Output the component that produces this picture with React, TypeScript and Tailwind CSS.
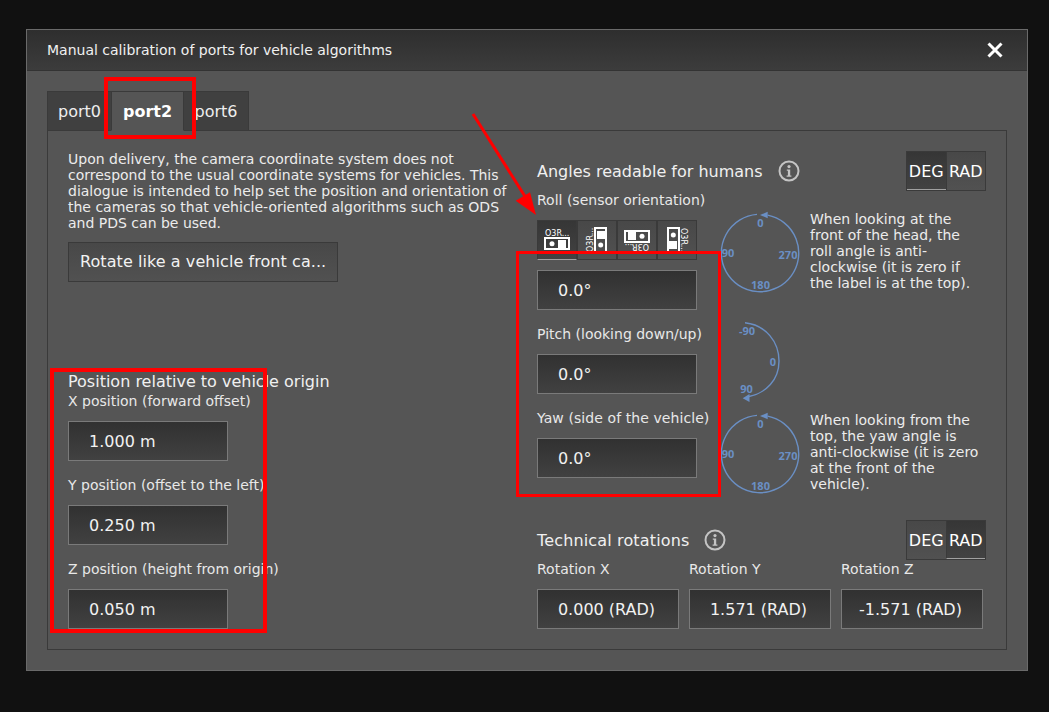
const font = { fontFamily: '"DejaVu Sans", sans-serif' };
const labelStyle = { fontFamily: '"Open Sans", sans-serif', fontWeight: 700, fontSize: 11 };

function ChipIcon({ rotate }: { rotate: number }) {
  return (
    <svg viewBox="0 0 40 40" className="-m-px block h-10 w-10">
      <g transform={`rotate(${rotate} 20 20)`}>
        <text x="8" y="16" fill="#fff" fontSize="8" fontFamily="DejaVu Sans, sans-serif">
          O3R...
        </text>
        <rect x="8" y="18" width="24" height="11" fill="none" stroke="#fff" strokeWidth="2" />
        <circle cx="15" cy="23.7" r="2.5" fill="#fff" />
        <rect x="21" y="20" width="8" height="8" fill="#fff" />
      </g>
    </svg>
  );
}

function InfoIcon() {
  return (
    <svg viewBox="0 0 22 22" className="block h-[22px] w-[22px]">
      <circle cx="11" cy="11" r="9.5" fill="none" stroke="#c4c4c4" strokeWidth="2" />
      <circle cx="11" cy="6.6" r="1.6" fill="#c4c4c4" />
      <path d="M8.8 9.4h3.4v6h1.2v1.4H8.6v-1.4h1.3v-4.6H8.8z" fill="#c4c4c4" />
    </svg>
  );
}

function Circle() {
  return (
    <svg viewBox="0 0 90 80" className="h-20 w-[90px] shrink-0 overflow-visible">
      <path d="M47.7 4.07A38.7 38.7 0 1 1 37 3.42" fill="none" stroke="#6a8fc4" strokeWidth="1.4" />
      <path d="M40 4 47.7 0.7 47.7 7.3z" fill="#6a8fc4" />
      <g fill="#6a8fc4" style={labelStyle} textAnchor="middle">
        <text x="40.5" y="16">0</text>
        <text x="8" y="46">90</text>
        <text x="68" y="48">270</text>
        <text x="40.5" y="78">180</text>
      </g>
    </svg>
  );
}

function PitchArc() {
  return (
    <svg viewBox="0 0 90 80" className="h-20 w-[90px] overflow-visible">
      <path d="M25 2.7C46 5 59 22 59 41 59 60 46 73 29 76.5" fill="none" stroke="#6a8fc4" strokeWidth="1.4" />
      <path d="M22.7 78.3 29.5 74 29.5 82z" fill="#6a8fc4" />
      <g fill="#6a8fc4" style={labelStyle} textAnchor="middle">
        <text x="27" y="15">-90</text>
        <text x="53" y="46">0</text>
        <text x="26.5" y="73">90</text>
      </g>
    </svg>
  );
}

function Field({ label, value, center, className }: { label: string; value: string; center?: boolean; className?: string }) {
  return (
    <div className={className}>
      <div className="h-4 whitespace-nowrap text-sm leading-4 text-[#e8e8e8]">{label}</div>
      <div
        className={`mt-3 flex h-10 items-center border border-[#7a7a7a] bg-gradient-to-b from-[#313131] to-[#414141] pt-0.5 text-base text-[#f2f2f2] ${
          center ? "justify-center pr-[3px]" : "pl-5"
        }`}
      >
        {value}
      </div>
    </div>
  );
}

function UnitToggle({ active }: { active: "DEG" | "RAD" }) {
  return (
    <div className="flex h-10 w-20 border border-[#3a3a3a] text-base text-white">
      {["DEG", "RAD"].map((unit, i) => (
        <div
          key={unit}
          className={`flex flex-1 items-center justify-center pt-0.5 ${i === 1 ? "border-l border-[#3a3a3a]" : ""} ${
            unit === active
              ? "border-b border-b-[#a0a0a0] bg-gradient-to-b from-[#363636] to-[#424242]"
              : "bg-gradient-to-b from-[#484848] to-[#515151]"
          }`}
        >
          {unit}
        </div>
      ))}
    </div>
  );
}

export default function App() {
  const tabs = ["port0", "port2", "port6"];
  return (
    <div className="relative h-[712px] w-[1049px] overflow-hidden bg-[#111111] pl-[26px] pt-[29px]" style={font}>
      <div className="h-[642px] w-[1002px] border border-[#6a6a6a] bg-[#555555]">
        <div className="flex h-[41px] items-center justify-between border-b border-[#333333] bg-gradient-to-b from-[#2e2e2e] to-[#3c3c3c] pl-5 pr-6">
          <span className="text-sm text-[#f0f0f0]">Manual calibration of ports for vehicle algorithms</span>
          <svg viewBox="0 0 16 16" className="h-4 w-4">
            <path d="M1.5 1.5 14.5 14.5M14.5 1.5 1.5 14.5" stroke="#fff" strokeWidth="3" />
          </svg>
        </div>

        <div className="px-5 pt-5">
          <div className="flex h-10">
            {tabs.map((tab) => (
              <div
                key={tab}
                className={`relative flex h-10 items-center justify-center border border-[#3a3a3a] pt-0.5 text-base ${
                  tab === "port2"
                    ? "z-10 -mx-px w-[73px] border-b-transparent bg-[#555555] font-bold text-white"
                    : "bg-[#404040] text-[#eeeeee] " + (tab === "port0" ? "w-[65px]" : "w-[66px]")
                }`}
              >
                {tab}
              </div>
            ))}
          </div>

          <div className="-mt-px flex h-[520px] w-[960px] border border-[#3a3a3a] pl-5 pt-5">
            <div className="flex w-[469px] flex-col">
              <p className="w-[445px] text-sm leading-4 text-[#ececec]">
                Upon delivery, the camera coordinate system does not correspond to the usual coordinate systems for
                vehicles. This dialogue is intended to help set the position and orientation of the cameras so that
                vehicle-oriented algorithms such as ODS and PDS can be used.
              </p>
              <div className="mt-[11px] flex h-10 w-[270px] items-center border border-[#3a3a3a] bg-gradient-to-b from-[#484848] to-[#515151] pl-[11px] text-base tracking-[0.07px] text-[#f2f2f2]">
                Rotate like a vehicle front ca...
              </div>
              <div className="mt-[91px] text-base leading-[18px] text-[#f0f0f0]">Position relative to vehicle origin</div>
              <Field className="mt-[2px] w-[160px]" label="X position (forward offset)" value="1.000 m" />
              <Field className="mt-4 w-[160px]" label="Y position (offset to the left)" value="0.250 m" />
              <Field className="mt-4 w-[160px]" label="Z position (height from origin)" value="0.050 m" />
            </div>

            <div className="flex w-[450px] flex-col">
              <div className="flex h-10 items-center">
                <span className="pt-0.5 text-base text-[#f0f0f0]">Angles readable for humans</span>
                <span className="ml-[15px]"><InfoIcon /></span>
                <span className="ml-auto mr-[1px]"><UnitToggle active="DEG" /></span>
              </div>
              <div className="flex">
                <div className="w-[183px] pt-[1px]">
                  <div className="h-4 whitespace-nowrap text-sm leading-4 text-[#e8e8e8]">Roll (sensor orientation)</div>
                  <div className="mt-3 flex h-10 w-40">
                    {[0, -90, 180, 90].map((rotate) => (
                      <div
                        key={rotate}
                        className={`h-10 w-10 border border-[#3a3a3a] ${
                          rotate === 0
                            ? "border-b-[#a0a0a0] bg-gradient-to-b from-[#363636] to-[#424242]"
                            : "bg-gradient-to-b from-[#484848] to-[#515151]"
                        }`}
                      >
                        <ChipIcon rotate={rotate} />
                      </div>
                    ))}
                  </div>
                  <div className="mt-[10px] flex h-10 w-40 items-center border border-[#7a7a7a] bg-gradient-to-b from-[#313131] to-[#414141] pl-5 pt-0.5 text-base text-[#f2f2f2]">
                    0.0°
                  </div>
                  <Field className="mt-4 w-40" label="Pitch (looking down/up)" value="0.0°" />
                  <Field className="mt-4 w-40 [&>div:first-child]:tracking-[0.08px]" label="Yaw (side of the vehicle)" value="0.0°" />
                </div>
                <div className="flex flex-col pt-5">
                  <div className="flex h-20">
                    <Circle />
                    <p className="w-[176px] text-sm leading-4 text-[#ececec]">
                      When looking at the front of the head, the roll angle is anti-clockwise (it is zero if the label is at the top).
                    </p>
                  </div>
                  <div className="mt-[29px] h-20"><PitchArc /></div>
                  <div className="mt-[12px] flex h-20">
                    <Circle />
                    <p className="w-[176px] text-sm leading-4 text-[#ececec]">
                      When looking from the top, the yaw angle is anti-clockwise (it is zero at the front of the vehicle).
                    </p>
                  </div>
                </div>
              </div>
              <div className="mt-7 flex h-10 items-center">
                <span className="pt-0.5 text-base tracking-[0.15px] text-[#f0f0f0]">Technical rotations</span>
                <span className="ml-[15px]"><InfoIcon /></span>
                <span className="ml-auto mr-[1px]"><UnitToggle active="RAD" /></span>
              </div>
              <div className="mt-[1px] flex gap-[10px]">
                <Field center className="w-[142px]" label="Rotation X" value="0.000 (RAD)" />
                <Field center className="w-[142px]" label="Rotation Y" value="1.571 (RAD)" />
                <Field center className="w-[142px]" label="Rotation Z" value="-1.571 (RAD)" />
              </div>
            </div>
          </div>
        </div>
      </div>

      {/* red annotations on top of the screenshot */}
      <div className="absolute left-[104px] top-[77px] h-[62px] w-[92px] border-[4px] border-[#ff0000]" />
      <div className="absolute left-[516px] top-[251px] h-[246px] w-[205px] border-[3px] border-[#ff0000]" />
      <div className="absolute left-[50px] top-[368px] h-[265px] w-[217px] border-[4px] border-[#ff0000]" />
      <svg className="absolute left-0 top-0 h-[712px] w-[1049px]" viewBox="0 0 1049 712" fill="none">
        <path d="M473 114 526 198" stroke="#ff0000" strokeWidth="3" />
        <path d="M536 215 515.7 200.7 530 192.3z" fill="#ff0000" />
      </svg>
    </div>
  );
}
